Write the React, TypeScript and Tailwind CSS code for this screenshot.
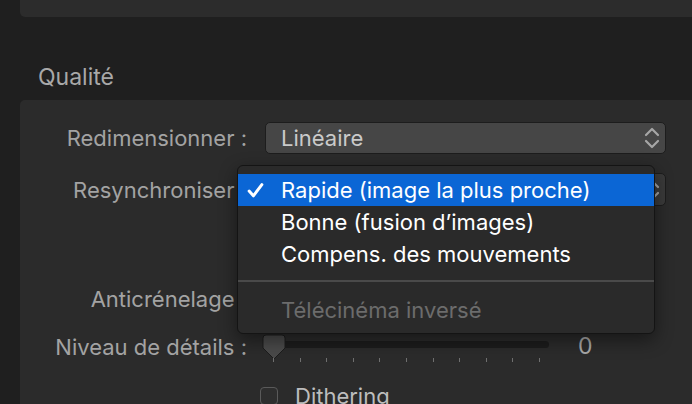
import React from 'react';

const ticks = Array.from({ length: 11 }, (_, i) => i);

const Chevrons: React.FC = () => (
  <svg width="18" height="24" viewBox="0 0 18 24" fill="none" stroke="#a6a6a6" strokeWidth="2.2" strokeLinecap="round" strokeLinejoin="round">
    <path d="M3 9 L9 3 L15 9" />
    <path d="M3 15 L9 21 L15 15" />
  </svg>
);

const Check: React.FC = () => (
  <svg width="17" height="17" viewBox="0 0 16 16" fill="none" stroke="#ffffff" strokeWidth="2.8" strokeLinecap="round" strokeLinejoin="round">
    <path d="M2 8.5 L6 13 L14 2.5" />
  </svg>
);

const Label: React.FC<{ children: React.ReactNode }> = ({ children }) => (
  <div className="w-[227px] shrink-0 text-right text-[22px] leading-[28px] text-[#a3a3a3] whitespace-nowrap">{children}</div>
);

export default function App() {
  return (
    <div
      className="w-[692px] h-[404px] overflow-hidden bg-[#1f1f1f] flex flex-col"
      style={{ fontFamily: 'Inter, "Noto Sans", sans-serif' }}
    >
      {/* panneau précédent */}
      <div className="shrink-0 ml-[20px] h-[17px] bg-[#2c2c2c] rounded-bl-[5px]" />

      <div className="shrink-0 ml-[38px] mt-[45px] h-[38px] text-[23px] text-[#a8a8a8] leading-[30px]">Qualité</div>

      {/* panneau Qualité */}
      <div className="relative shrink-0 ml-[20px] h-[304px] bg-[#2b2b2b] rounded-tl-[5px] pt-[22px]">
        {/* Redimensionner */}
        <div className="flex items-center h-[32px]">
          <Label>Redimensionner :</Label>
          <div className="ml-[18px] w-[401px] h-[32px] rounded-[5px] bg-[#464646] border border-[#1d1d1d] flex items-center pl-[15px] pr-[4px]">
            <span className="flex-1 text-[22px] leading-[28px] text-[#cacaca]">Linéaire</span>
            <Chevrons />
          </div>
        </div>

        {/* Resynchroniser */}
        <div className="flex items-center h-[33px] mt-[19px]">
          <Label>Resynchroniser :</Label>
          <div className="ml-[18px] w-[401px] h-[33px] rounded-[5px] bg-[#3a3a3a] border border-[#1d1d1d] flex items-center justify-end pr-[4px]">
            <Chevrons />
          </div>
        </div>

        {/* Anticrénelage */}
        <div className="flex items-center h-[32px] mt-[77px]">
          <Label>Anticrénelage :</Label>
        </div>

        {/* Niveau de détails */}
        <div className="flex items-start h-[40px] mt-[19px]">
          <div className="mt-[-1px]">
            <Label>Niveau de détails :</Label>
          </div>
          <div className="relative ml-[15px] w-[290px] h-[40px] shrink-0">
            <div className="absolute left-[2px] right-[3px] top-[7px] h-[7px] rounded-full bg-[#1c1c1c]" />
            <svg className="absolute left-0 top-0" width="24" height="28" viewBox="0 0 24 28">
              <path d="M4 1 H20 Q23 1 23 4 V14 L12 25 L1 14 V4 Q1 1 4 1 Z" fill="#4a4a4a" stroke="#1c1c1c" strokeWidth="1" />
            </svg>
            <div className="absolute left-[11px] top-[24px] flex gap-[25.6px]">
              {ticks.map((t) => (
                <div key={t} className="w-px h-[4px] bg-[#6f6f6f]" />
              ))}
            </div>
          </div>
          <div className="ml-[26px] mt-[-2px] text-[23px] leading-[28px] text-[#a8a8a8]">0</div>
        </div>

        {/* Dithering */}
        <div className="flex items-center mt-[8px] ml-[240px] gap-[17px]">
          <div className="w-[18px] h-[18px] rounded-[4px] border border-[#5a5a5a] bg-[#2e2e2e]" />
          <span className="text-[22px] leading-[28px] text-[#bdbdbd]">Dithering</span>
        </div>

        {/* menu déroulant ouvert */}
        <div className="absolute left-[217px] top-[65px] w-[418px] h-[169px] rounded-[6px] bg-[#2a2a2a] border border-[#141414] shadow-[0_6px_18px_rgba(0,0,0,0.45)] pt-[8px] text-[22px] leading-[28px]">
          <div className="h-[32px] bg-[#0b66d5] flex items-center text-white">
            <div className="w-[43px] flex justify-start pl-[9px]">
              <Check />
            </div>
            <span>Rapide (image la plus proche)</span>
          </div>
          <div className="h-[32px] flex items-center pl-[43px] text-white">Bonne (fusion d’images)</div>
          <div className="h-[32px] flex items-center pl-[43px] text-white">Compens. des mouvements</div>
          <div className="mt-[10px] h-[2px] bg-[#4a4a4a]" />
          <div className="mt-[12px] h-[32px] flex items-center pl-[43px] text-[#6c6c6c]">Télécinéma inversé</div>
        </div>
      </div>
    </div>
  );
}
